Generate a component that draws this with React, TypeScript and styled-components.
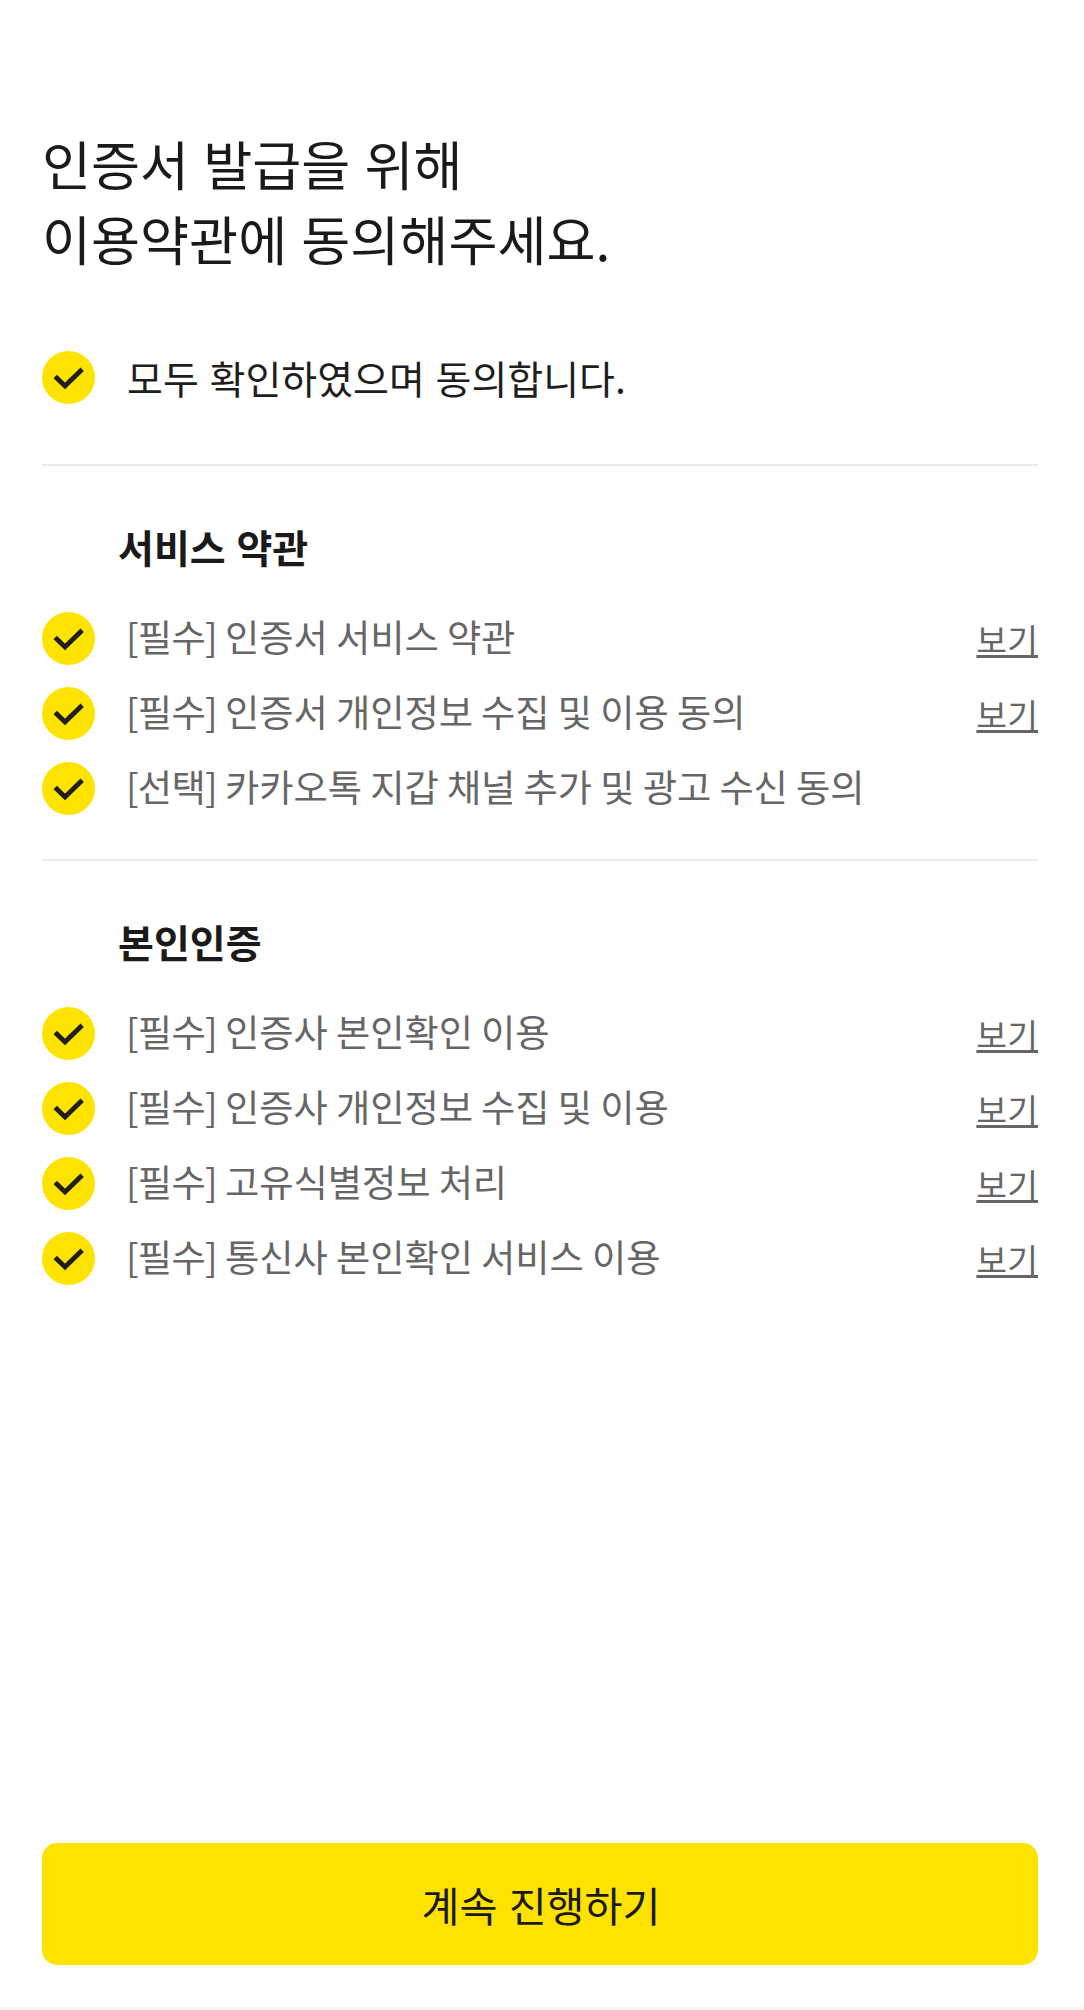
import React from "react";
import styled, { createGlobalStyle } from "styled-components";

const Global = createGlobalStyle`
  html, body { margin: 0; padding: 0; background: #f5f5f5; }
  body { font-family: "Noto Sans CJK KR", "Noto Sans", sans-serif; }
`;

const Page = styled.main`
  box-sizing: border-box;
  height: 2007px;
  background: #fff;
  padding: 125px 46px 42px 42px;
  display: flex;
  flex-direction: column;
`;

const Title = styled.h1`
  margin: 0;
  font-size: 53.3px;
  line-height: 75px;
  font-weight: 400;
  color: #1a1a1a;
  word-spacing: 2.2px;
`;

const AllRow = styled.div`
  display: flex;
  align-items: center;
  height: 53px;
  margin-top: 76px;
  padding-bottom: 60px;
  border-bottom: 2px solid #eaeaea;
`;

const AllText = styled.span`
  margin-left: 32px;
  padding-bottom: 2px;
  font-size: 39px;
  word-spacing: 2px;
  color: #1e1e1e;
`;

const CheckCircle = styled.span`
  flex: none;
  width: 53px;
  height: 53px;
  border-radius: 50%;
  background: #ffe300;
  display: flex;
`;

const Section = styled.section<{ $divider?: boolean }>`
  padding-bottom: ${(p) => (p.$divider ? "33px" : "0")};
  border-bottom: ${(p) => (p.$divider ? "2px solid #eaeaea" : "none")};
`;

const SectionTitle = styled.h2`
  margin: 0;
  padding: 52px 0 27px 76px;
  font-size: 39px;
  line-height: 56px;
  font-weight: 700;
  word-spacing: 2px;
  color: #1a1a1a;
`;

const Row = styled.div`
  display: flex;
  align-items: center;
  height: 75px;
`;

const RowText = styled.span`
  flex: 1;
  margin-left: 31px;
  padding-bottom: 5px;
  font-size: 37.3px;
  color: #666;
  letter-spacing: -0.1px;
`;

const Tag = styled.span`
  letter-spacing: -0.75px;
`;

const ViewLink = styled.a`
  padding-bottom: 1px;
  font-size: 33.5px;
  color: #666;
  text-decoration: underline;
`;

const Spacer = styled.div`
  flex: 1;
`;

const Submit = styled.button`
  flex: none;
  height: 122px;
  border: none;
  border-radius: 15px;
  background: #ffe300;
  color: #1a1a1a;
  font-family: inherit;
  font-size: 41.3px;
  word-spacing: 2px;
  padding-left: 8px;
`;

const Check = () => (
  <CheckCircle>
    <svg width="53" height="53" viewBox="0 0 53 53" fill="none">
      <path d="M13.2 25.5 L23 35 L40.2 18.2" stroke="#1e1e1e" strokeWidth="4.8" />
    </svg>
  </CheckCircle>
);

const Item = ({ tag = "[필수]", text, link = true }: { tag?: string; text: string; link?: boolean }) => (
  <Row>
    <Check />
    <RowText>
      <Tag>{tag}</Tag> {text}
    </RowText>
    {link && <ViewLink>보기</ViewLink>}
  </Row>
);

export default function App() {
  return (
    <Page>
      <Global />
      <Title>
        인증서 발급을 위해
        <br />
        이용약관에 동의해주세요.
      </Title>
      <AllRow>
        <Check />
        <AllText>모두 확인하였으며 동의합니다.</AllText>
      </AllRow>
      <Section $divider>
        <SectionTitle>서비스 약관</SectionTitle>
        <Item text="인증서 서비스 약관" />
        <Item text="인증서 개인정보 수집 및 이용 동의" />
        <Item tag="[선택]" text="카카오톡 지갑 채널 추가 및 광고 수신 동의" link={false} />
      </Section>
      <Section>
        <SectionTitle>본인인증</SectionTitle>
        <Item text="인증사 본인확인 이용" />
        <Item text="인증사 개인정보 수집 및 이용" />
        <Item text="고유식별정보 처리" />
        <Item text="통신사 본인확인 서비스 이용" />
      </Section>
      <Spacer />
      <Submit>계속 진행하기</Submit>
    </Page>
  );
}
